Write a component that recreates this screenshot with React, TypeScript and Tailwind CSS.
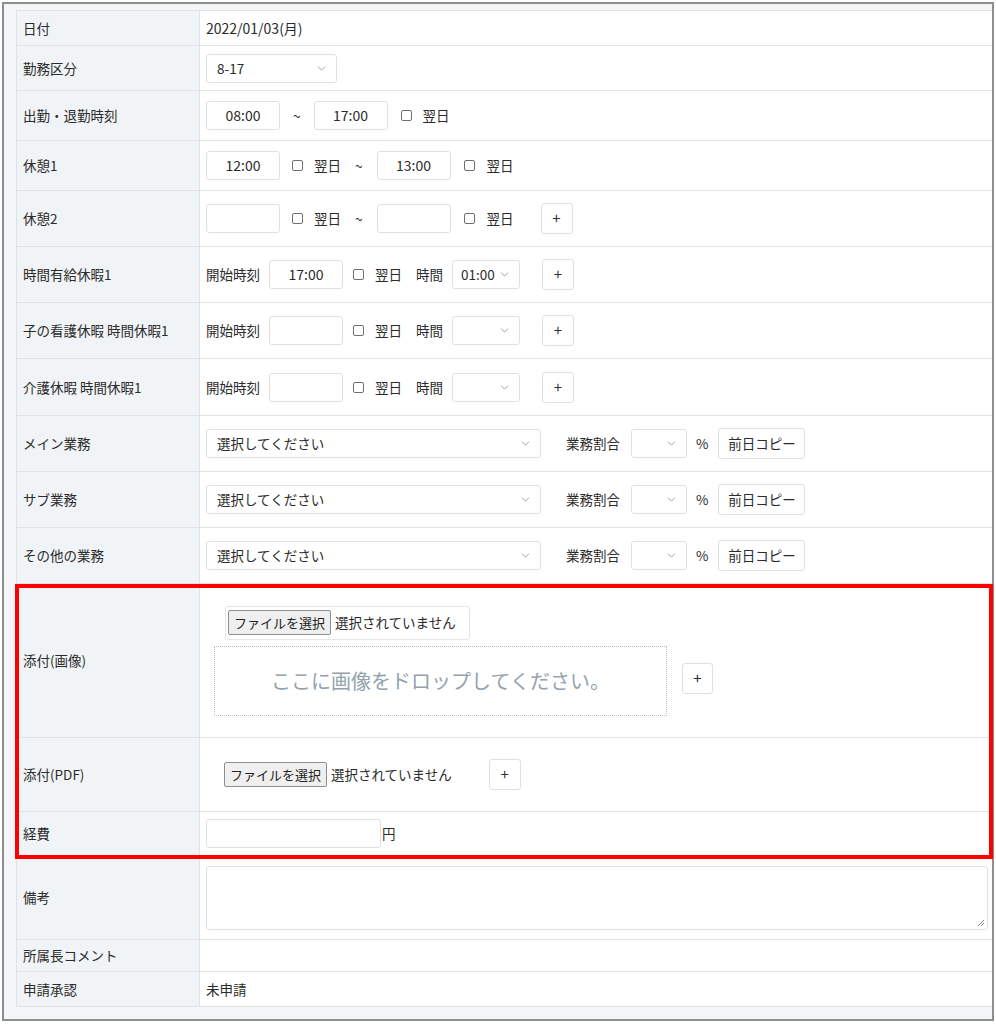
import React from "react";
import { ChevronDown } from "lucide-react";

const font = { fontFamily: '"Noto Sans CJK JP", "Noto Sans", "Liberation Sans", sans-serif' };

function Row({ label, h, children }: { label: string; h: string; children?: React.ReactNode }) {
  return (
    <div className={`flex border-b border-[#dfe3e7] ${h}`}>
      <div className="w-[183px] shrink-0 flex items-center pl-[6px] bg-[#f1f4f6] border-r border-[#dfe3e7]">{label}</div>
      <div className="flex-1 flex items-center pl-[6px]">{children}</div>
    </div>
  );
}

function TimeInput({ v, w = "w-[74px]" }: { v?: string; w?: string }) {
  return (
    <div className={`${w} h-[29px] shrink-0 border border-[#dde1e5] rounded-[3px] bg-white flex items-center justify-center text-[14px]`}>
      {v}
    </div>
  );
}

function Check() {
  return <span className="inline-block w-[11px] h-[11px] border border-[#6f6f6f] rounded-[2px] bg-white shrink-0" />;
}

function Select({ v, w, pl = "pl-[10px]" }: { v?: string; w: string; pl?: string }) {
  return (
    <div className={`${w} h-[29px] shrink-0 border border-[#dde1e5] rounded-[3px] bg-white flex items-center justify-between ${pl} pr-[8px] text-[13.5px]`}>
      <span>{v}</span>
      <ChevronDown size={13} strokeWidth={1.6} className="text-[#8b97a3]" />
    </div>
  );
}

function Plus() {
  return (
    <div className="w-[32px] h-[31px] shrink-0 border border-[#dde1e5] rounded-[3px] bg-white flex items-center justify-center text-[15px] text-[#333]">+</div>
  );
}

function FileBtn() {
  return (
    <div className="h-[25px] px-[5px] shrink-0 border border-[#8f8f8f] rounded-[2px] bg-[#efefef] flex items-center text-[13px] text-[#222]">ファイルを選択</div>
  );
}

export default function App() {
  return (
    <div className="w-[996px] h-[1024px] bg-white relative text-[13.5px] text-[#2b2b2b]" style={font}>
      <div className="absolute left-[2px] top-[2px] w-[992px] h-[1019px] border-2 border-[#8e8e8e] bg-[#f5f6f7] overflow-hidden">
        <div className="ml-[12px] mt-[6px] w-[990px] border-t border-l border-[#dfe3e7] bg-white">
          <Row label="日付" h="h-[35px]">
            <span className="text-[14px]">2022/01/03(月)</span>
          </Row>
          <Row label="勤務区分" h="h-[45px]">
            <Select v="8-17" w="w-[131px]" />
          </Row>
          <Row label="出勤・退勤時刻" h="h-[50px]">
            <TimeInput v="08:00" />
            <span className="ml-[13px] mr-[13px]">~</span>
            <TimeInput v="17:00" />
            <span className="ml-[13px]"><Check /></span>
            <span className="ml-[11px]">翌日</span>
          </Row>
          <Row label="休憩1" h="h-[50px]">
            <TimeInput v="12:00" />
            <span className="ml-[12px]"><Check /></span>
            <span className="ml-[11px]">翌日</span>
            <span className="ml-[14px] mr-[14px]">~</span>
            <TimeInput v="13:00" />
            <span className="ml-[13px]"><Check /></span>
            <span className="ml-[12px]">翌日</span>
          </Row>
          <Row label="休憩2" h="h-[56px]">
            <TimeInput />
            <span className="ml-[12px]"><Check /></span>
            <span className="ml-[11px]">翌日</span>
            <span className="ml-[14px] mr-[14px]">~</span>
            <TimeInput />
            <span className="ml-[13px]"><Check /></span>
            <span className="ml-[12px]">翌日</span>
            <span className="ml-[27px]"><Plus /></span>
          </Row>
          {[
            ["時間有給休暇1", "17:00", "01:00"],
            ["子の看護休暇 時間休暇1", "", ""],
            ["介護休暇 時間休暇1", "", ""],
          ].map(([l, t, s], i) => (
            <Row key={l} label={l} h={i === 2 ? "h-[57px]" : "h-[56px]"}>
              <span>開始時刻</span>
              <span className="ml-[9px]"><TimeInput v={t} /></span>
              <span className="ml-[10px]"><Check /></span>
              <span className="ml-[11px]">翌日</span>
              <span className="ml-[14px]">時間</span>
              <span className="ml-[9px]"><Select v={s} w="w-[68px]" pl="pl-[8px]" /></span>
              <span className="ml-[22px]"><Plus /></span>
            </Row>
          ))}
          {["メイン業務", "サブ業務", "その他の業務"].map((l) => (
            <Row key={l} label={l} h="h-[56px]">
              <Select v="選択してください" w="w-[335px]" />
              <span className="ml-[25px]">業務割合</span>
              <span className="ml-[11px]"><Select w="w-[56px]" /></span>
              <span className="ml-[9px]">%</span>
              <div className="ml-[10px] h-[31px] w-[87px] border border-[#dde1e5] rounded-[3px] bg-white flex items-center justify-center">前日コピー</div>
            </Row>
          ))}
          <div className="flex border-b border-[#dfe3e7] h-[154px]">
            <div className="w-[183px] shrink-0 flex items-center pl-[6px] bg-[#f1f4f6] border-r border-[#dfe3e7]">添付(画像)</div>
            <div className="flex-1 flex items-center">
              <div className="flex flex-col ml-[14px]">
                <div className="ml-[11px] w-[245px] h-[34px] border border-[#e3e6e9] rounded-[3px] bg-white flex items-center pl-[2px]">
                  <FileBtn />
                  <span className="ml-[4px]">選択されていません</span>
                </div>
                <div className="mt-[6px] w-[453px] h-[70px] border border-dotted border-[#b9c2c9] flex items-center justify-center text-[20px] text-[#93a3ad]">
                  ここに画像をドロップしてください。
                </div>
              </div>
              <div className="ml-[15px] mt-[35px]">
                <div className="w-[31px] h-[31px] border border-[#dde1e5] rounded-[3px] bg-white flex items-center justify-center text-[15px]">+</div>
              </div>
            </div>
          </div>
          <Row label="添付(PDF)" h="h-[74px]">
            <span className="ml-[18px]"><FileBtn /></span>
            <span className="ml-[4px]">選択されていません</span>
            <span className="ml-[37px]"><Plus /></span>
          </Row>
          <Row label="経費" h="h-[44px]">
            <TimeInput w="w-[175px]" />
            <span className="ml-[1px]">円</span>
          </Row>
          <Row label="備考" h="h-[84px]">
            <div className="w-[782px] h-[64px] border border-[#dde1e5] rounded-[3px] bg-white relative">
              <svg className="absolute right-[2px] bottom-[2px]" width="8" height="8" viewBox="0 0 8 8">
                <path d="M7 1 L1 7 M7 4 L4 7" stroke="#888" strokeWidth="1" />
              </svg>
            </div>
          </Row>
          <Row label="所属長コメント" h="h-[32px]" />
          <Row label="申請承認" h="h-[35px]">
            <span>未申請</span>
          </Row>
        </div>
      </div>
      <div className="absolute left-[15px] top-[584px] w-[978px] h-[275px] border-[4px] border-[#ff0000] pointer-events-none" />
    </div>
  );
}
